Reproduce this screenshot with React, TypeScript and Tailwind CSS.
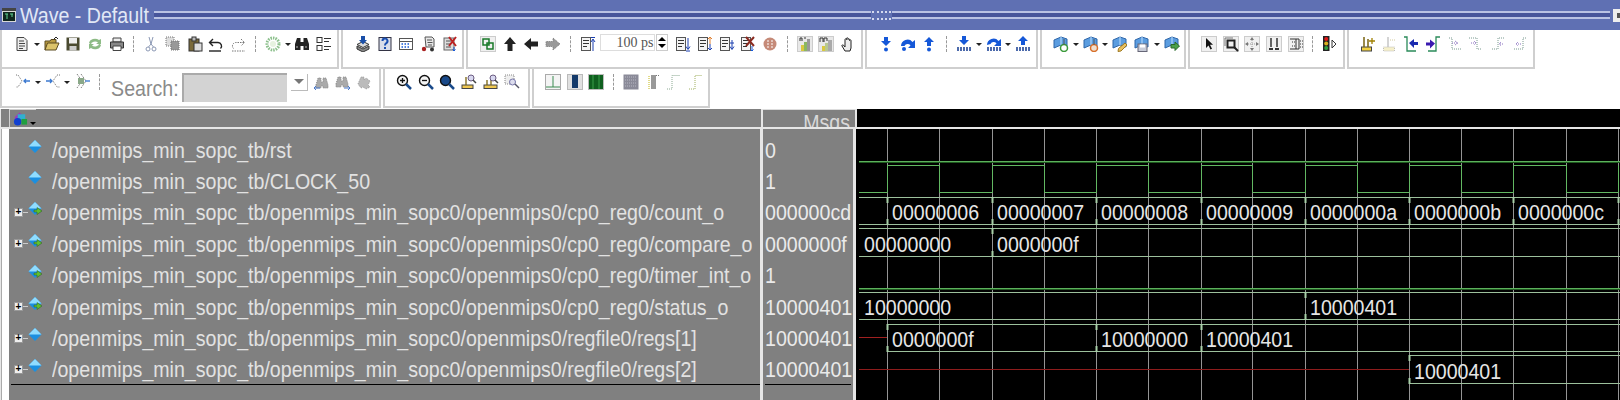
import React from 'react';

// toolbar icons, all in a 16x16 box
const blue = '#1558d8';
const list = (
  <>
    <rect x="1.5" y="1.5" width="9" height="13" fill="#f4f4f4" stroke="#555" />
    <path d="M3 4.5h6M3 7.5h6M3 10.5h4" stroke="#333" />
  </>
);
const tile = <rect x="0.5" y="0.5" width="15" height="15" fill="#f0f0f0" stroke="#ccc" />;
const flag = (
  <>
    <path d="M1 4l7-3 6 2v8l-6-2-7 3z" fill="#5b9de0" stroke="#2f66a8" />
    <path d="M8 1v8" stroke="#bfe0ff" />
  </>
);
const fadedStep = 'M2 2h3v11h9';

const ICONS: Record<string, React.ReactNode> = {
  doc: (
    <>
      <path d="M3 1.5h7l3 3v10H3z" fill="#eee" stroke="#444" />
      <path d="M5 5h5M5 7.5h6M5 10h6M5 12.5h4" stroke="#444" />
    </>
  ),
  folder: (
    <>
      <path d="M1 14V5h5l1-1.5h5V7" fill="#b89a40" stroke="#5a4a20" />
      <path d="M1 14l2.5-7H15l-3 7z" fill="#dcc36a" stroke="#5a4a20" />
      <path d="M10 3l2-2 2 2" fill="none" stroke="#222" />
    </>
  ),
  save: (
    <>
      <rect x="1.5" y="1.5" width="13" height="13" fill="#4a4a30" />
      <rect x="4" y="2" width="8" height="5.5" fill="#eee" />
      <rect x="4.5" y="10" width="7" height="4.5" fill="#ccc" />
    </>
  ),
  refresh: (
    <g fill="#8dbb85">
      <path d="M2 7a6 5 0 0 1 10-3l2-1v5H9l2-1.5a4 3 0 0 0-7 2z" />
      <path d="M14 9a6 5 0 0 1-10 3l-2 1V8h5L5 9.5a4 3 0 0 0 7-2z" />
    </g>
  ),
  print: (
    <>
      <path d="M4 2h8v4H4z" fill="#eee" stroke="#444" />
      <path d="M1.5 6h13v6h-13z" fill="#888" stroke="#333" />
      <path d="M4 10h8v4.5H4z" fill="#fff" stroke="#444" />
    </>
  ),
  cut: (
    <g fill="none" stroke="#8b98b4">
      <path d="M6 1l2 7 2-7M8 8l-2.5 3M8 8l2.5 3" />
      <circle cx="5" cy="13" r="2" />
      <circle cx="11" cy="13" r="2" />
    </g>
  ),
  copy: (
    <g stroke="#777" strokeDasharray="1 1">
      <rect x="1" y="1" width="8" height="9" fill="#ddd" />
      <rect x="6" y="5" width="8" height="9" fill="#999" />
    </g>
  ),
  paste: (
    <>
      <rect x="2" y="3" width="10" height="12" fill="#7a6a3a" stroke="#333" />
      <rect x="5" y="1" width="4" height="4" fill="#bbb" stroke="#333" />
      <rect x="7" y="7" width="8" height="8" fill="#ddd" stroke="#333" />
    </>
  ),
  undo: (
    <g fill="none" stroke="#222" strokeWidth="1.4">
      <path d="M5 3L1.5 6.5 5 10M2 6.5h8a3.5 3.5 0 0 1 2.5 6" />
      <path d="M1 15h12" />
    </g>
  ),
  redo: (
    <g fill="none" stroke="#777" strokeDasharray="1.5 1">
      <path d="M11 3l3.5 3.5L11 10M14 6.5H6a3.5 3.5 0 0 0-2.5 6" />
      <path d="M2 15h13" />
    </g>
  ),
  ring: (
    <>
      <circle cx="8" cy="8" r="6" fill="none" stroke="#8cc08c" strokeWidth="3" strokeDasharray="1.5 1" />
      <circle cx="8" cy="8" r="3" fill="#e6f2e0" />
    </>
  ),
  binoc: (
    <>
      <path d="M1 8l2-6h3.5v4h3V2H13l2 6v6H9.500v-4h-3v4H1z" fill="#222" />
      <path d="M3 10v2M12 10v2" stroke="#bbb" />
    </>
  ),
  tree: (
    <>
      <rect x="1" y="1.5" width="5" height="5" fill="#fff" stroke="#333" />
      <rect x="1" y="9.5" width="5" height="5" fill="#fff" stroke="#333" />
      <path d="M8 2.5h7M8 5.5h5M8 10.5h7M8 13.5h5" stroke="#333" />
    </>
  ),
  stack: (
    <>
      <path d="M2 10l6 3 6-3v3l-6 3-6-3z" fill="#888" stroke="#333" />
      <path d="M2 8.5l6-3 6 3-6 3z" fill="#ddd" stroke="#333" />
      <path d="M6 0h4v4h2L8 8.5 4 4h2z" fill="#1a4fa8" />
    </>
  ),
  help: (
    <>
      <rect x="2" y="1.5" width="12" height="13" fill="#d8deea" stroke="#334" />
      <path d="M5.5 5a2.5 2.5 0 1 1 3.5 2.3c-1 .5-1 1-1 2.2M8 11v2" fill="none" stroke="#1a4fb0" strokeWidth="2" />
    </>
  ),
  cal: (
    <>
      <rect x="1.5" y="2.5" width="13" height="11" fill="#fff" stroke="#555" />
      <path d="M1.5 5.5h13" stroke="#555" />
      <path d="M3.5 8h9M3.5 11h9" stroke={blue} strokeWidth="1.5" strokeDasharray="1.5 1.5" />
    </>
  ),
  cart: (
    <>
      <path d="M5 1h7l2 2v8H6z" fill="#e8e8e8" stroke="#555" />
      <path d="M7 4h5M7.5 6.5h5M8 9h4" stroke="#555" />
      <circle cx="4" cy="13" r="2.2" fill="#a22" />
      <circle cx="12" cy="13.5" r="2" fill="#333" />
    </>
  ),
  docx: (
    <>
      <rect x="2" y="2" width="10" height="12" fill="#ddd" stroke="#666" />
      <path d="M4 5h5M4 8h5M4 11h5" stroke="#555" />
      <path d="M7 1l7 9M14 1l-7 9" stroke="#b22" strokeWidth="2" />
      <path d="M12 11v4M10.5 13.5L12 15l1.5-1.5" fill="none" stroke={blue} />
    </>
  ),
  squares: (
    <>
      {tile}
      <rect x="3" y="3" width="6" height="6" fill="none" stroke="#1a7a2a" strokeWidth="1.5" />
      <rect x="7" y="7" width="6" height="6" fill="none" stroke="#1a7a2a" strokeWidth="1.5" />
    </>
  ),
  up: <path d="M8 1l6 7h-3.5v7h-5V8H2z" fill="#222" />,
  left: <path d="M1 8l7-6v3.5h7v5H8V14z" fill="#222" />,
  right: <path d="M15 8L8 2v3.5H1v5h7V14z" fill="#999" stroke="#777" strokeDasharray="1 1" />,
  listup: (
    <>
      {list}
      <path d="M13 15V4M11 6l2-3 2 3M11 1.5h4" fill="none" stroke="#1a3fb0" />
    </>
  ),
  listdn: (
    <>
      {list}
      <path d="M13 2v11M11 10.5l2 3 2-3M11 15h4" fill="none" stroke="#1a3fb0" />
    </>
  ),
  listud: (
    <>
      {list}
      <path d="M13 8V1M11 3l2-2 2 2" fill="none" stroke="#e08030" />
      <path d="M13 8v6M11 12l2 2 2-2" fill="none" stroke="#1a3fb0" />
    </>
  ),
  listdn2: (
    <>
      {list}
      <path d="M13 4v9M11 10.5l2 3 2-3M11 7h4" fill="none" stroke="#1a3fb0" />
    </>
  ),
  listx: (
    <>
      {list}
      <path d="M6 1l8 9M14 1l-8 9" stroke="#8a2a20" strokeWidth="2" />
      <path d="M12 10v5M10.5 13.5L12 15l1.5-1.5" fill="none" stroke={blue} />
    </>
  ),
  stop: (
    <>
      <circle cx="8" cy="8" r="6.5" fill="#c58a78" />
      <path d="M5 5h2M5 8h2M5 11h2M9 5h2M9 8h2M9 11h2" stroke="#fff" />
    </>
  ),
  wave1: (
    <>
      <rect x="0.5" y="0.5" width="15" height="15" fill="#e8e8e8" stroke="#ccc" />
      <path d="M3 5V2h2v3M7 2h2" fill="none" stroke="#333" />
      <rect x="4" y="9" width="3" height="6" fill="#d9c840" />
      <rect x="7" y="6" width="3" height="9" fill="#8ab860" />
      <rect x="10" y="3" width="3" height="12" fill="#999" />
    </>
  ),
  wave2: (
    <>
      <rect x="0.5" y="0.5" width="15" height="15" fill="#e8e8e8" stroke="#ccc" />
      <path d="M2 6V2h3v4M6 6V2h3v3" fill="none" stroke="#333" />
      <rect x="4" y="10" width="3" height="5" fill="#d9c840" />
      <rect x="7" y="7" width="3" height="8" fill="#b8c890" />
      <rect x="10" y="4" width="4" height="11" fill="#aaa" />
    </>
  ),
  hand: <path d="M5 15L2 10c-.5-1 .8-1.5 1.5-.8L5 11V3.500c0-1 1.500-1 1.500 0V2.500c0-1 1.500-1 1.500 0v1c0-1 1.500-1 1.500 0v1c0-1 1.500-1 1.500 0V12l-1 3z" fill="#eee" stroke="#222" />,
  stepin: (
    <>
      <path d="M6 1h4v4h3l-5 5-5-5h3z" fill={blue} />
      <circle cx="8" cy="13.5" r="2" fill={blue} />
    </>
  ),
  stepover: (
    <>
      <path d="M1 10a6.5 6.5 0 0 1 11.5-4L15 4v8H8l2.5-2.5a3.5 3.5 0 0 0-6 .5z" fill={blue} />
      <circle cx="4" cy="13" r="2" fill={blue} />
    </>
  ),
  stepout: (
    <>
      <path d="M8 1l5 5h-3v4H6V6H3z" fill={blue} />
      <circle cx="8" cy="13.5" r="2" fill={blue} />
    </>
  ),
  stepin2: (
    <>
      <path d="M6 0h4v4h3l-5 5-5-5h3z" fill={blue} />
      <path d="M2 11v4M5 11v4M8 11v4M11 11v4M14 11v4" stroke="#123a90" strokeWidth="1.5" />
    </>
  ),
  stepover2: (
    <>
      <path d="M1 9a6.5 6.5 0 0 1 11.5-4L15 3v7H8l2.5-2.5a3.5 3.5 0 0 0-6 .5z" fill={blue} />
      <path d="M2 11v4M5 11v4M8 11v4M11 11v4M14 11v4" stroke="#123a90" strokeWidth="1.5" />
    </>
  ),
  stepout2: (
    <>
      <path d="M8 0l5 5h-3v4H6V5H3z" fill={blue} />
      <path d="M2 11v4M5 11v4M8 11v4M11 11v4M14 11v4" stroke="#123a90" strokeWidth="1.5" />
    </>
  ),
  flagadd: (
    <>
      {flag}
      <circle cx="11" cy="12" r="3.5" fill="#fff" stroke="#3a9a3a" strokeWidth="1.5" />
      <path d="M11 3v6" stroke="#555" />
    </>
  ),
  flagorg: (
    <>
      {flag}
      <circle cx="11" cy="12" r="3.5" fill="#f0e0d0" stroke="#d8702a" strokeWidth="1.5" />
      <path d="M11 3v6" stroke="#555" />
    </>
  ),
  flagedit: (
    <>
      {flag}
      <path d="M13 7l2 2-6 6-3 .5.5-3z" fill="#e8c060" stroke="#a07a20" />
    </>
  ),
  flagsave: (
    <>
      {flag}
      <rect x="4" y="8" width="9" height="7.5" fill="#c8ccd8" stroke="#667" />
      <rect x="6" y="8.5" width="5" height="3" fill="#fff" />
    </>
  ),
  flaggo: (
    <>
      {flag}
      <path d="M15.5 10L11 6v2.5H7V12h4v2.500z" fill="#4aa04a" stroke="#2a6a2a" />
    </>
  ),
  cursor: (
    <>
      {tile}
      <path d="M5 2v10l2.5-2.5 2 4 1.5-.8-2-4H12z" fill="#111" />
    </>
  ),
  zbox: (
    <>
      {tile}
      <path d="M2 10V2h8" fill="none" stroke="#777" />
      <rect x="4.5" y="4.5" width="7" height="7" fill="none" stroke="#222" strokeWidth="2" />
      <path d="M11 11l4 4" stroke="#222" strokeWidth="2" />
    </>
  ),
  move: (
    <>
      {tile}
      <path d="M8 1l2 3H6zM8 15l2-3H6zM1 8l3-2v4zM15 8l-3-2v4z" fill="#777" />
      <path d="M8 4v8M4 8h8" stroke="#999" strokeDasharray="1 1" />
    </>
  ),
  bars: (
    <>
      {tile}
      <path d="M5 2v9M11 2v9" stroke="#333" strokeWidth="1.5" />
      <path d="M3 14v-2h4v2zM9 14v-2h4v2z" fill="#333" />
    </>
  ),
  gridb: (
    <>
      {tile}
      <path d="M2 3h6v10H2M8 3h3v10H8" fill="none" stroke="#333" />
      <path d="M12 5h3M12 8h3M12 11h3M4 6h3M4 10h3" stroke="#333" strokeDasharray="1 1" />
    </>
  ),
  traffic: (
    <>
      <rect x="1" y="0" width="6.5" height="15" fill="#222" />
      <circle cx="4.2" cy="3" r="2" fill="#e01818" />
      <circle cx="4.2" cy="7.5" r="2" fill="#d8b020" />
      <circle cx="4.2" cy="12" r="2" fill="#30a040" />
      <path d="M10 4l4 4-4 4z" fill="none" stroke="#333" />
    </>
  ),
  cursy: (
    <>
      <rect x="1.5" y="11" width="10" height="4" fill="#f0d040" stroke="#444" />
      <path d="M4 1v10M8 3v8" stroke="#7a6410" strokeWidth="1.5" />
      <path d="M9 5h6M12 2v6" stroke="#a08000" strokeWidth="1.3" />
    </>
  ),
  cursf: (
    <g opacity="0.55">
      <rect x="1.5" y="11" width="11" height="4" fill="#efe4a0" stroke="#888" strokeDasharray="1 1" />
      <path d="M6 1v10" stroke="#888" strokeWidth="1.3" />
      <path d="M8 4h6" stroke="#b0a050" strokeDasharray="1 1" />
    </g>
  ),
  edgel: (
    <>
      <path d="M1 1h3v14h9" fill="none" stroke="#2a8a5a" strokeWidth="1.3" />
      <path d="M6 7l5-4v3h4v3h-4v3z" fill="#1a2ab0" />
    </>
  ),
  edger: (
    <>
      <path d="M15 1h-4v14H3" fill="none" stroke="#2a8a5a" strokeWidth="1.3" />
      <path d="M10 7.5l-5-4v3H1v3h4v3z" fill="#3a1ab0" />
    </>
  ),
  edgef1: (
    <g fill="none" strokeDasharray="1 1">
      <path d={fadedStep} stroke="#7a9a90" />
      <path d="M5 7h6M8 5l3 2-3 2" stroke="#8a70c0" />
    </g>
  ),
  edgef2: (
    <g fill="none" strokeDasharray="1 1">
      <path d="M1 2h8v11h5" stroke="#7a9a90" />
      <path d="M3 7h5M6 5l2 2-2 2" stroke="#8a70c0" />
    </g>
  ),
  edgef3: (
    <g fill="none" strokeDasharray="1 1">
      <path d="M14 2H8v11H2" stroke="#7a9a90" />
      <path d="M13 8H9M11 6L9 8l2 2" stroke="#8a70c0" />
    </g>
  ),
  edgef4: (
    <g fill="none" strokeDasharray="1 1">
      <path d="M14 2h-3v11H1" stroke="#7a9a90" />
      <path d="M9 8H4M6 6L4 8l2 2" stroke="#8a70c0" />
    </g>
  ),
  merge1: (
    <>
      <path d="M1 1h2l4 6-4 6H1" fill="none" stroke="#777" strokeDasharray="1 1" />
      <path d="M15 7H9M11 5L9 7l2 2" fill="none" stroke="#3a78d0" strokeWidth="1.3" />
    </>
  ),
  merge2: (
    <>
      <path d="M15 1h-3L8 7l4 6h3" fill="none" stroke="#777" strokeDasharray="1 1" />
      <path d="M1 7h6M5 5l2 2-2 2" fill="none" stroke="#3a78d0" strokeWidth="1.3" />
    </>
  ),
  center: (
    <>
      <path d="M3 0l5 7-5 7M7 0l5 7-5 7" fill="none" stroke="#666" strokeDasharray="1 1" />
      <rect x="4" y="4" width="6" height="6" fill="#8aa888" />
      <path d="M11 7h5" stroke="#3a78d0" strokeWidth="1.3" />
    </>
  ),
  fs1: (
    <g strokeDasharray="1 1">
      <path d="M3 11l2-7h3v4h2V4h3l2 7v3h-5v-2H8v2H3z" fill="#aaa" stroke="#888" />
      <path d="M7 14H1M3 12l-2 2 2 2" fill="none" stroke="#4a78c8" strokeDasharray="none" />
    </g>
  ),
  fs2: (
    <g strokeDasharray="1 1">
      <path d="M1 10l2-7h3v4h2V3h3l2 7v3H8v-2H6v2H1z" fill="#aaa" stroke="#888" />
      <path d="M9 14h6M13 12l2 2-2 2" fill="none" stroke="#4a78c8" strokeDasharray="none" />
    </g>
  ),
  fs3: <path d="M2 10l3-7h3v3l2-2 4 3-2 4 2 2-4 2-3-2-2 1z" fill="#bbb" stroke="#999" strokeDasharray="1 1" />,
  zin: (
    <>
      <circle cx="6.5" cy="6.5" r="5" fill="#f4f4f4" stroke="#111" strokeWidth="1.4" />
      <path d="M10 10l5 5" stroke="#1a4a8a" strokeWidth="2.5" />
      <path d="M4 6.5h5M6.5 4v5" stroke="#111" strokeWidth="1.3" />
    </>
  ),
  zout: (
    <>
      <circle cx="6.5" cy="6.5" r="5" fill="#f4f4f4" stroke="#111" strokeWidth="1.4" />
      <path d="M10 10l5 5" stroke="#1a4a8a" strokeWidth="2.5" />
      <path d="M4 6.5h5" stroke="#111" strokeWidth="1.3" />
    </>
  ),
  zfull: (
    <>
      <circle cx="6.5" cy="6.5" r="5" fill="#1a4a8a" stroke="#111" strokeWidth="1.4" />
      <path d="M10 10l5 5" stroke="#1a4a8a" strokeWidth="2.5" />
    </>
  ),
  zcur: (
    <>
      <rect x="1" y="11" width="11" height="3.5" fill="#f0c850" stroke="#444" />
      <path d="M5 3v8" stroke="#7a6410" strokeWidth="1.3" />
      <circle cx="10" cy="4" r="3" fill="#d8d8f0" stroke="#6a5a80" />
      <path d="M12 6l3 3" stroke="#444" strokeWidth="1.5" />
    </>
  ),
  zcur2: (
    <>
      <rect x="1" y="11" width="13" height="3.5" fill="#f0c850" stroke="#444" />
      <path d="M4 6v5M8 3v8" stroke="#7a6410" strokeWidth="1.3" />
      <circle cx="10" cy="4" r="3" fill="#d8d8f0" stroke="#6a5a80" />
      <path d="M12 6l3 3" stroke="#444" strokeWidth="1.5" />
    </>
  ),
  zfade: (
    <>
      <rect x="1" y="1" width="9" height="9" fill="#eee" stroke="#888" strokeDasharray="1 1" />
      <circle cx="8.5" cy="8" r="3" fill="#dde" stroke="#77a" />
      <path d="M11 10l4 4" stroke="#556" strokeWidth="1.5" />
    </>
  ),
  tbox: (
    <>
      <rect x="0.5" y="0.5" width="15" height="15" fill="#f4f4f4" stroke="#aaa" />
      <path d="M8 2v11M1 13h14" stroke="#3a8a50" />
    </>
  ),
  bluebox: (
    <>
      <rect x="0.5" y="0.5" width="15" height="15" fill="#e0e0e0" stroke="#bbb" />
      <rect x="5" y="1" width="6" height="13" fill="#143a6a" />
    </>
  ),
  greenbox: (
    <>
      <rect x="0.5" y="0.5" width="15" height="15" fill="#0f5f1f" stroke="#bbb" />
      <path d="M5 1v14M11 1v14" stroke="#3aa04a" />
    </>
  ),
  hatch: (
    <>
      <rect x="0.5" y="0.5" width="15" height="15" fill="#8a8a98" />
      <path d="M2 3h12M2 6h12M2 9h12M2 12h12" stroke="#b8b8c4" strokeDasharray="1 1" />
    </>
  ),
  wavey: (
    <>
      <rect x="6" y="1" width="5" height="14" fill="#999" />
      <path d="M4 15V2" stroke="#d8d060" strokeWidth="1.5" strokeDasharray="1 1" />
      <path d="M11 1.5h4" stroke="#777" strokeDasharray="1 1" />
    </>
  ),
  wavef1: <path d="M1 15h5V1.5h8" fill="none" stroke="#8aa890" strokeDasharray="1 1" />,
  wavef2: <path d="M1 15h6V1.5h7" fill="none" stroke="#a0b060" strokeDasharray="1 1" />,
};

function I({ n }: { n: string }) {
  return (
    <div className="w-[21.7px] shrink-0 flex justify-center">
      <svg width="16" height="16" viewBox="0 0 16 16">
        {ICONS[n]}
      </svg>
    </div>
  );
}

function Drop() {
  return (
    <div className="w-[8px] h-4 shrink-0 flex items-center justify-center">
      <div className="border-x-[3px] border-t-[3px] border-x-transparent border-t-[#222]" />
    </div>
  );
}

function Sep() {
  return (
    <div className="w-[13px] h-4 shrink-0 flex justify-center">
      <div className="border-l border-dashed border-[#999]" />
    </div>
  );
}

function Section({ className, children }: { className: string; children: React.ReactNode }) {
  return (
    <div className={`h-full shrink-0 flex items-start border-l-2 border-r-2 border-b-2 border-[#cfcfcf] ${className}`}>
      {children}
    </div>
  );
}

function TitleLines({ className }: { className: string }) {
  return <div className={`h-[8px] border-y-2 border-[#b9c2e4] bg-[#47559b] ${className}`} />;
}

const SIGNALS = [
  { name: '/openmips_min_sopc_tb/rst', value: '0', tree: false, out: false },
  { name: '/openmips_min_sopc_tb/CLOCK_50', value: '1', tree: false, out: false },
  { name: '/openmips_min_sopc_tb/openmips_min_sopc0/openmips0/cp0_reg0/count_o', value: '000000cd', tree: true, out: true },
  { name: '/openmips_min_sopc_tb/openmips_min_sopc0/openmips0/cp0_reg0/compare_o', value: '0000000f', tree: true, out: true },
  { name: '/openmips_min_sopc_tb/openmips_min_sopc0/openmips0/cp0_reg0/timer_int_o', value: '1', tree: false, out: true },
  { name: '/openmips_min_sopc_tb/openmips_min_sopc0/openmips0/cp0_reg0/status_o', value: '10000401', tree: true, out: true },
  { name: '/openmips_min_sopc_tb/openmips_min_sopc0/openmips0/regfile0/regs[1]', value: '10000401', tree: true, out: false },
  { name: '/openmips_min_sopc_tb/openmips_min_sopc0/openmips0/regfile0/regs[2]', value: '10000401', tree: true, out: false },
];

function SignalIcon({ out }: { out: boolean }) {
  return (
    <svg width="14" height="14" viewBox="0 0 14 14" className="shrink-0 -mt-[6px]">
      <path d="M7 0l6.5 6.5L7 13 .5 6.500z" fill="#1b8fe0" />
      <path d="M7 0l6.5 6.5H.5z" fill="#8fdcff" />
      {out && <path d="M6 8h3V5.5L14 9l-5 3.5V10H6z" fill="#5fc030" stroke="#2a5a20" strokeWidth="0.5" />}
    </svg>
  );
}

function SignalRow({ name, tree, out }: { name: string; tree: boolean; out: boolean }) {
  return (
    <div className="h-[31.4px] flex items-center pl-[5px] whitespace-nowrap">
      <div className="w-[14px] shrink-0 flex items-center">
        {tree && (
          <>
            <div className="w-[9px] h-[9px] bg-[#eee] border border-[#999] flex items-center justify-center text-[10px] leading-none text-black font-bold">+</div>
            <div className="w-[5px] h-px bg-[#ccc]" />
          </>
        )}
      </div>
      <SignalIcon out={out} />
      <span className="ml-[10px] inline-block scale-y-[1.12] text-[#e2e2e2]">{name}</span>
    </div>
  );
}

// waveform, drawn in page coordinates
const GRID = [887, 939, 992, 1044, 1096, 1148, 1201, 1252, 1305, 1357, 1409, 1461, 1513, 1566, 1618];

function clockPath() {
  let d = 'M859 192.5';
  let high = false;
  for (const x of GRID) {
    d += `H${x + 0.5}V${high ? 192.5 : 165.5}`;
    high = !high;
  }
  return d;
}

const BUSES = [
  {
    top: 197, bottom: 224, from: 859, marks: [887, 992, 1096, 1201, 1305, 1409, 1513, 1618],
    labels: [[892, '00000006'], [997, '00000007'], [1101, '00000008'], [1206, '00000009'], [1310, '0000000a'], [1414, '0000000b'], [1518, '0000000c']],
  },
  { top: 228, bottom: 256, from: 859, marks: [992], labels: [[864, '00000000'], [997, '0000000f']] },
  { top: 292, bottom: 319, from: 859, marks: [1305], labels: [[864, '10000000'], [1310, '10000401']] },
  { top: 324, bottom: 351, from: 887, marks: [887, 1096, 1201], labels: [[892, '0000000f'], [1101, '10000000'], [1206, '10000401']] },
  { top: 355, bottom: 383, from: 1409, marks: [1409], labels: [[1414, '10000401']] },
] as { top: number; bottom: number; from: number; marks: number[]; labels: [number, string][] }[];

function Waves() {
  return (
    <svg viewBox="856 129 764 271" className="w-[764px] h-[271px] shrink-0 bg-black">
      {GRID.map((x) => (
        <path key={x} d={`M${x + 0.5} 129V400`} stroke="#949494" />
      ))}
      <path d="M859 161.5H1620" stroke="#5cb05c" />
      <path d="M859 162.5H1620" stroke="#1f5a1f" />
      <path d={clockPath()} fill="none" stroke="#62b862" />
      <path d="M859 288.5H1620" stroke="#5cb05c" />
      <path d="M859 289.5H1620" stroke="#1f5a1f" />
      <path d="M859 337.5H887" stroke="#a02020" />
      <path d="M859 369.5H1409" stroke="#8e1c1c" />
      {BUSES.map((b) => (
        <g key={b.top}>
          <path d={`M${b.from} ${b.top + 0.5}H1620M${b.from} ${b.bottom + 0.5}H1620`} stroke="#9cc09c" />
          {b.marks.map((x) => (
            <path key={x} d={`M${x + 0.5} ${b.top}v6M${x + 0.5} ${b.bottom - 5}v6`} stroke="#a8d0a8" strokeWidth="2" />
          ))}
          {b.labels.map(([x, label]) => (
            <text key={x} transform={`translate(${x} ${b.bottom - 4.5}) scale(1 1.12)`} fontSize="19.6" fill="#e6e6e6">
              {label}
            </text>
          ))}
        </g>
      ))}
    </svg>
  );
}

export default function App() {
  return (
    <div className="w-[1620px] h-[400px] overflow-hidden bg-white font-['Liberation_Sans',sans-serif] text-[19.6px] leading-6">
      {/* Title bar */}
      <div className="h-[30px] bg-[#5f70b3] flex items-center">
        <svg width="14" height="14" viewBox="0 0 14 14" className="ml-[2px] shrink-0">
          <rect width="14" height="14" fill="#d8d8d8" />
          <rect y="0" width="14" height="3" fill="#444" />
          <rect x="1" y="4" width="12" height="9" fill="#10261e" />
          <path d="M3 6h3M8 6h3M5 6v5M10 6v3" stroke="#5fd090" />
        </svg>
        <span className="ml-[4px] inline-block scale-y-[1.14] text-[#e2e8f6]">Wave - Default</span>
        <TitleLines className="ml-[5px] flex-1" />
        <div className="w-[19px] h-[9px] mx-[1px] border-y-2 border-dotted border-[#d5daef]" />
        <TitleLines className="flex-1" />
        <div className="ml-[3px] w-[7px] h-[13px] bg-[#eee] flex items-center justify-end">
          <div className="w-[3px] h-[5px] bg-[#555]" />
        </div>
      </div>

      {/* Toolbars */}
      <div className="h-[39px] flex gap-[2px]">
        <Section className="w-[339px] pl-[9px] pt-[6px]">
          <I n="doc" /><Drop /><I n="folder" /><I n="save" /><I n="refresh" /><I n="print" /><Sep />
          <I n="cut" /><I n="copy" /><I n="paste" /><I n="undo" /><I n="redo" /><Sep />
          <I n="ring" /><Drop /><I n="binoc" /><I n="tree" />
        </Section>
        <Section className="w-[123px] pl-[9px] pt-[6px]">
          <I n="stack" /><I n="help" /><I n="cal" /><I n="cart" /><I n="docx" />
        </Section>
        <Section className="w-[397px] pl-[9px] pt-[6px]">
          <I n="squares" /><I n="up" /><I n="left" /><I n="right" /><Sep /><I n="listup" />
          <div className="ml-[2px] -mt-[2px] w-[55px] h-[17px] shrink-0 flex items-center justify-between border border-[#ddd] pl-[15px] pr-[1px] font-['Liberation_Serif',serif] text-[14px] leading-none text-[#555] whitespace-nowrap">
            <span>100</span>
            <span>ps</span>
          </div>
          <div className="ml-px -mt-[2px] w-[12px] h-[17px] shrink-0 flex flex-col items-center justify-around border border-[#ccc]">
            <div className="border-x-[4px] border-b-[4px] border-x-transparent border-b-black" />
            <div className="border-x-[4px] border-t-[4px] border-x-transparent border-t-black" />
          </div>
          <div className="w-[4px] shrink-0" />
          <I n="listdn" /><I n="listud" /><I n="listdn2" /><I n="listx" /><I n="stop" /><Sep />
          <I n="wave1" /><I n="wave2" /><I n="hand" />
        </Section>
        <Section className="w-[173px] pl-[8px] pt-[6px]">
          <I n="stepin" /><I n="stepover" /><I n="stepout" /><Sep />
          <I n="stepin2" /><Drop /><I n="stepover2" /><Drop /><I n="stepout2" />
        </Section>
        <Section className="w-[146px] pl-[8px] pt-[6px]">
          <I n="flagadd" /><Drop /><I n="flagorg" /><Drop /><I n="flagedit" /><I n="flagsave" /><Drop /><I n="flaggo" />
        </Section>
        <Section className="w-[157px] pl-[8px] pt-[6px]">
          <I n="cursor" /><I n="zbox" /><I n="move" /><I n="bars" /><I n="gridb" /><Sep /><I n="traffic" />
        </Section>
        <Section className="w-[188px] pl-[8px] pt-[6px]">
          <I n="cursy" /><I n="cursf" /><I n="edgel" /><I n="edger" /><I n="edgef1" /><I n="edgef2" /><I n="edgef3" /><I n="edgef4" />
        </Section>
      </div>
      <div className="h-[39px] mb-px flex gap-[2px]">
        <Section className="w-[381px] pl-[10px] pt-[5px]">
          <I n="merge1" /><Drop /><I n="merge2" /><Drop /><I n="center" /><Sep />
          <span className="ml-[5px] w-[66px] mt-[2px] inline-block scale-y-[1.12] text-[#8a8a8a]">Search:</span>
          <div className="ml-[5px] -mt-[1px] w-[105px] h-[29px] shrink-0 bg-[#d3d3d3] border-l-2 border-t-2 border-[#aaa]" />
          <div className="ml-[3px] -mt-[1px] w-[17px] h-[17px] shrink-0 flex items-center justify-center bg-white shadow-[1px_1px_0_#bbb]">
            <div className="border-x-[5px] border-t-[5px] border-x-transparent border-t-[#777]" />
          </div>
          <div className="w-[3px] shrink-0" />
          <I n="fs1" /><I n="fs2" /><I n="fs3" />
        </Section>
        <Section className="w-[147px] pl-[8px] pt-[5px]">
          <I n="zin" /><I n="zout" /><I n="zfull" /><I n="zcur" /><I n="zcur2" /><I n="zfade" />
        </Section>
        <Section className="w-[178px] pl-[8px] pt-[5px]">
          <I n="tbox" /><I n="bluebox" /><I n="greenbox" /><Sep />
          <I n="hatch" /><I n="wavey" /><I n="wavef1" /><I n="wavef2" />
        </Section>
      </div>

      {/* Wave window header */}
      <div className="h-[20px] flex gap-[2px] bg-[#e6e6e6] border-b-2 border-[#e6e6e6]">
        <div className="w-[760px] ml-px pl-[8px] bg-[#808080] shrink-0">
          <div className="w-[27px] h-[18px] flex items-center gap-[2px] pl-[3px] border-l border-t border-[#d0d0d0]">
            <svg width="16" height="15" viewBox="0 0 16 15">
              <path d="M2 6l5-5 5 5v3H2z" fill="#9a3ac0" />
              <rect x="5" y="3" width="8" height="6" fill="#30b0d0" />
              <circle cx="5" cy="11" r="4" fill="#1040d0" />
              <rect x="9" y="8" width="6" height="6" fill="#20a040" />
            </svg>
            <div className="mt-[10px] border-x-[3px] border-t-[3px] border-x-transparent border-t-black" />
          </div>
        </div>
        <div className="w-[92px] shrink-0 overflow-hidden bg-[#808080] border-t border-[#ddd] text-right pr-[5px] text-[#d8d8d8]">
          <span className="inline-block -mt-[2px] scale-y-[1.12]">Msgs</span>
        </div>
        <div className="flex-1 bg-black" />
      </div>

      {/* Signal list, values, waves */}
      <div className="h-[271px] flex bg-[#e6e6e6]">
        <div className="ml-px w-[759px] shrink-0 border-l border-[#aaa] pl-[7px] bg-white">
          <div className="h-full bg-[#808080] pt-[5px] overflow-hidden">
            {SIGNALS.map((s) => (
              <SignalRow key={s.name} name={s.name} tree={s.tree} out={s.out} />
            ))}
            <div className="ml-[2px] -mt-[1px] h-px bg-black" />
          </div>
        </div>
        <div className="ml-[3px] w-[90px] shrink-0 bg-[#808080] pt-[5px] pl-[2px]">
          {SIGNALS.map((s) => (
            <div key={s.name} className="h-[31.4px] flex items-center">
              <span className="inline-block scale-y-[1.12] text-[#eaeaea]">{s.value}</span>
            </div>
          ))}
          <div className="-mt-[1px] w-[86px] h-px bg-black" />
        </div>
        <div className="w-[3px] shrink-0" />
        <Waves />
      </div>
    </div>
  );
}
